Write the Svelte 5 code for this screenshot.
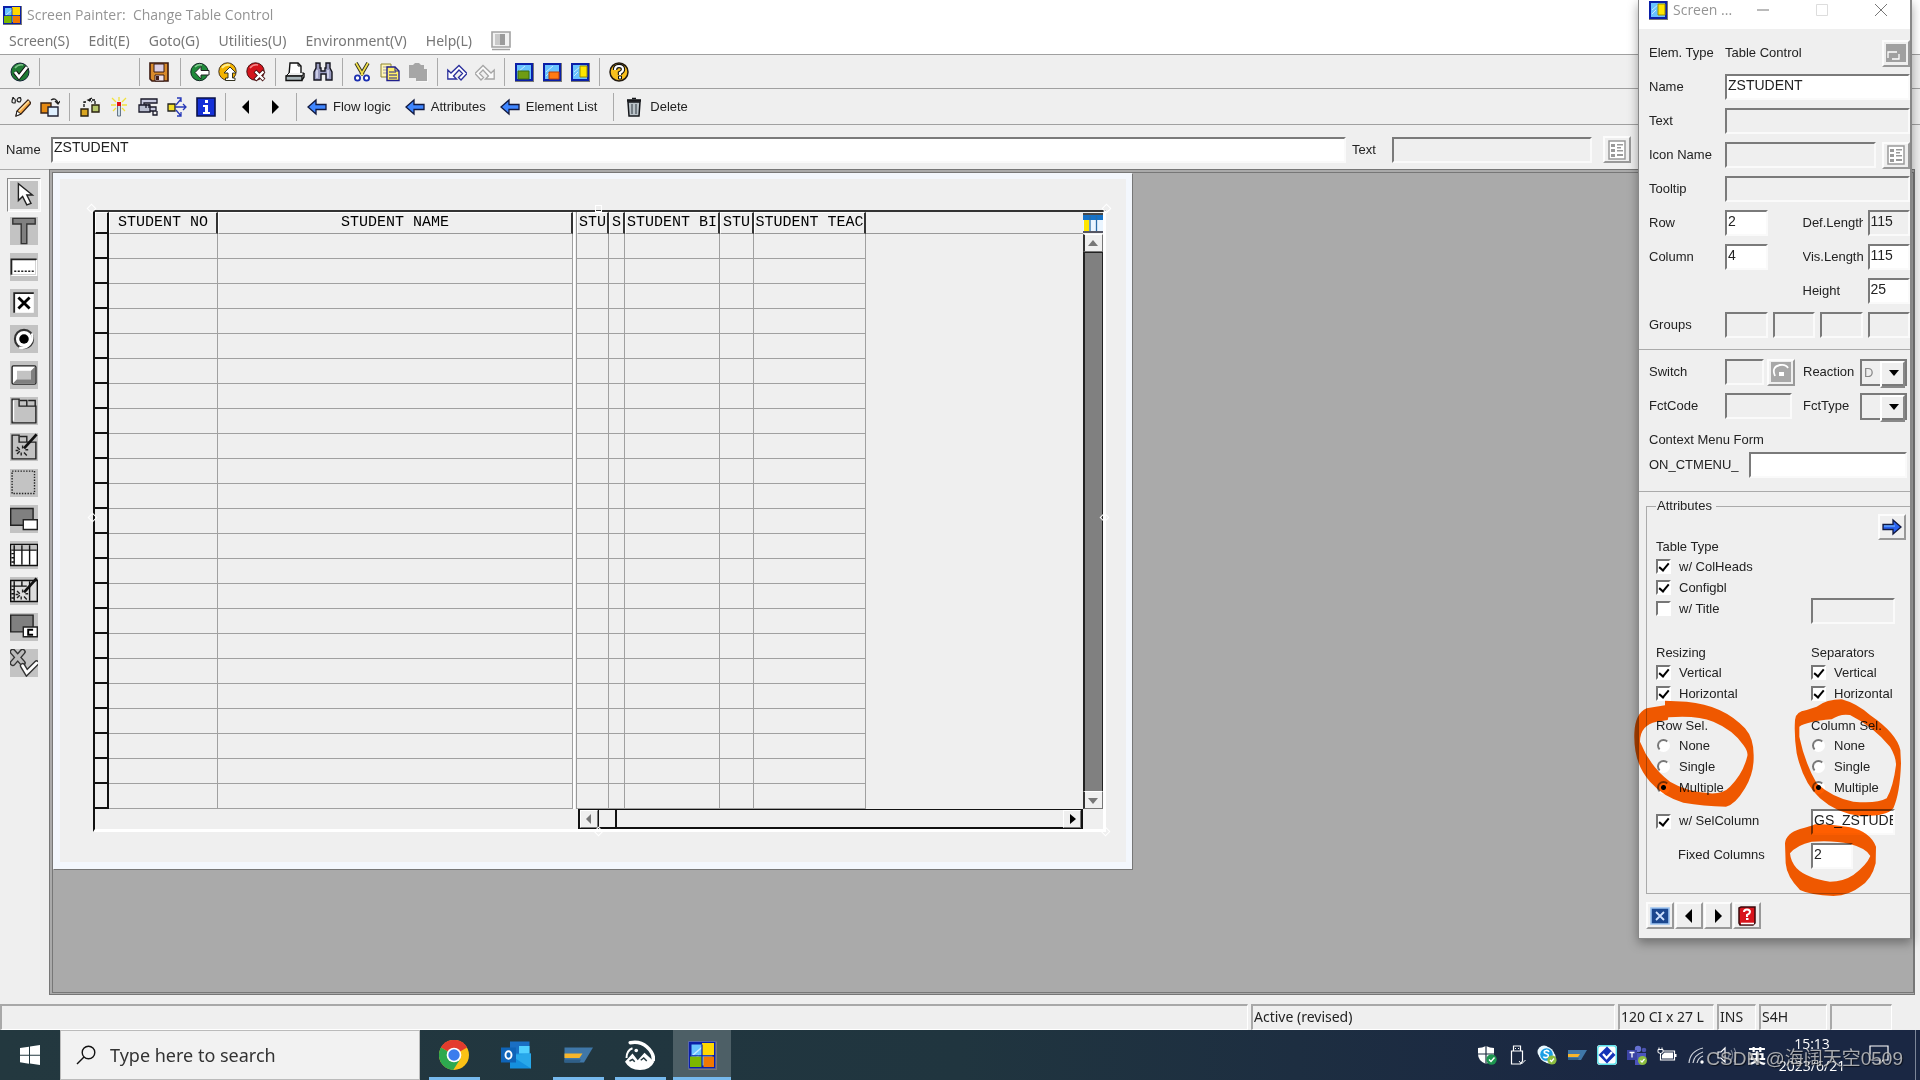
<script>
  const screenFrame = (inner) =>
    `<path d="M1 1h18v18H1z" fill="#fff"/><path d="M20 1v19H1" fill="none" stroke="#777" stroke-width="2"/><path d="M2 2h16v16H2z" fill="#69c3ff" stroke="#0a1fa8" stroke-width="2"/><path d="M4 10l7-6M4 14l4-4" stroke="#c6ecff"/>${inner}`;
  const arrow = (fill) =>
    `<path d="M1 10l8-7v4.500h10v5H9V17z" fill="${fill}" stroke="#101840" stroke-width="1.300"/>`;
  const plate = '<path d="M0 0h20v20H0z" fill="#c3c3c3"/>';
  const wand = '<path d="M19 1l-9 10" stroke="#111" stroke-width="2"/><path d="M5 10l2 2M9 9v2M5 15l2-2M10 14l2 2M8 16v-2M4 12.500h2M11 12h2" stroke="#222" fill="none"/>';

  const art = {
    painter: screenFrame('<path d="M10 2h8v8h-8z" fill="#ffd800"/><path d="M2 11h8v7H2z" fill="#7cb800"/><path d="M11 11h7v7h-7z" fill="#f07800"/><path d="M10 3v15M3 10.500h15" stroke="#0a1fa8" stroke-width=".8"/>'),
    ok: '<circle cx="10" cy="10" r="9" fill="#1f7a34" stroke="#123"/><path d="M5 6q3-4 8-3" stroke="#7ec28a" fill="none" stroke-width="1.500"/><path d="M5 10l4 5 8-10" fill="none" stroke="#111" stroke-width="4.500"/><path d="M5 10l4 5 8-10" fill="none" stroke="#fff" stroke-width="2.800"/>',
    save: '<path d="M1 1h18v18H3l-2-2z" fill="#d98a2b" stroke="#3b1a12" stroke-width="1.600"/><path d="M5 2h10v8H5z" fill="#dccfe4" stroke="#3b1a12"/><path d="M6 13h9v6H6z" fill="#efe3ee" stroke="#3b1a12"/><path d="M7 14h3v4H7z" fill="#43201c"/>',
    back: '<circle cx="9.500" cy="10" r="8.700" fill="#1f8a3a" stroke="#122"/><path d="M5 5q3-3 7-2" stroke="#86c890" fill="none" stroke-width="1.500"/><path d="M5 10.500l6-6v4h8v4.500h-8v4z" fill="#fff" stroke="#222"/>',
    up: '<circle cx="9.500" cy="9.500" r="8.700" fill="#f3b300" stroke="#432"/><path d="M4 6q3-4 8-3" stroke="#ffee88" fill="none" stroke-width="2"/><path d="M12 5l6 6h-3.500v5H17v2.500H7.500V16H10v-5H6z" fill="#fff" stroke="#332"/>',
    cancel: '<circle cx="9.500" cy="9.500" r="8.700" fill="#d4141c" stroke="#411"/><path d="M4 6q3-4 8-3" stroke="#f58a8a" fill="none" stroke-width="1.500"/><path d="M9 9l9 9M18 9l-9 9" stroke="#411" stroke-width="4"/><path d="M9.500 9.500l8 8M17.500 9.500l-8 8" stroke="#fff" stroke-width="2.400"/>',
    print: '<path d="M5 1h8l3 3v9H4z" fill="#fff" stroke="#111" stroke-width="1.400"/><path d="M13 1v3h3" fill="none" stroke="#111"/><path d="M4 11l-3 3h16l2-3h-2" fill="#eee" stroke="#111"/><path d="M1 14h16v4.500H1z" fill="#a8b4b8" stroke="#111" stroke-width="1.400"/><path d="M17 18l2-3v-4" stroke="#111" fill="none" stroke-width="1.400"/>',
    find: '<path d="M3 1h4v5h1v3h4V6h1V1h4v5l2 4v8h-6v-6H8v6H1v-8l2-4z" fill="#9a9cc0" stroke="#14141f" stroke-width="1.400"/><path d="M4 8v8M15 8v8" stroke="#d9daf0" stroke-width="1.600"/>',
    cut: '<path d="M4 1l7 12M16 1L9 13" stroke="#332" stroke-width="3.600"/><path d="M4 1l7 12M16 1L9 13" stroke="#f2e04a" stroke-width="1.700"/><circle cx="5.500" cy="16" r="2.600" fill="#fff" stroke="#1b2fb0" stroke-width="1.800"/><circle cx="14.500" cy="16" r="2.600" fill="#fff" stroke="#1b2fb0" stroke-width="1.800"/>',
    copy: '<path d="M1 2h10v13H1z" fill="#fff6b8" stroke="#8d8530"/><path d="M3 5h6M3 8h4M3 11h4" stroke="#99a"/><path d="M7 5h8l4 4v9.500H7z" fill="#ffef6a" stroke="#20208c" stroke-width="1.400"/><path d="M15 5v4h4M9 10h7M9 13h8M9 16h8" stroke="#20208c" fill="none"/>',
    paste: '<path d="M1 3h4l2-2h4l2 2h3v4h3v12H8v-3H1z" fill="#a6a6a6"/><path d="M20 8v12H9" stroke="#fff" fill="none"/>',
    undo: '<path d="M.8 8v9h8.700l-3-3 5.500-6 3.500 3.500-4 4 2.500 2.500 6-6.500L12 3.500 4 11z" fill="#fff" stroke="#2a2f9c" stroke-width="1.300"/>',
    redo: '<path d="M19.200 8v9h-8.700l3-3L8 8l-3.500 3.500 4 4L6 18 0 11.500 8 3.500l8 7.500z" fill="#fafafa" stroke="#a6a6a6" stroke-width="1.300"/>',
    s1: screenFrame('<path d="M4 9h11v8H4z" fill="#6f9c14" stroke="#3d6a12"/>'),
    s2: screenFrame('<path d="M7 10h10v7H7z" fill="#ff7a14" stroke="#b8400c"/>'),
    s3: screenFrame('<path d="M10 4h7v11h-7z" fill="#ffe600" stroke="#9a8d00"/>'),
    help: '<circle cx="10" cy="10" r="9" fill="#f8c01c" stroke="#221a10" stroke-width="1.500"/><path d="M6 8q0-4 4-4t4 3.500q0 2-3 3.500v2" fill="none" stroke="#111" stroke-width="4.400"/><path d="M6 8q0-4 4-4t4 3.500q0 2-3 3.500v2" fill="none" stroke="#fff" stroke-width="2.200"/><path d="M9.500 14h3v3h-3z" fill="#fff" stroke="#111"/>',
    layout: '<path d="M1 1h18v15H1z" fill="#f2f2f2" stroke="#a2a2a2" stroke-width="1.600"/><path d="M4 3h8v11H4z" fill="#c9c9c9"/><path d="M9 3h5v11H9z" fill="#9b9b9b"/><path d="M1 18.500h18" stroke="#a2a2a2" stroke-width="1.500"/>',
    pencil: '<path d="M1 5q0-4 2-3.500T4 6Q1 6 1 5M6 3q1-3 3-2t0 4q-3 0-3-2M1 1l2-.5M7 1l3-1" fill="none" stroke="#222" stroke-width="1.200"/><path d="M17 3l3 3-10 11-5 2 1-5z" fill="#f5a742" stroke="#3a2418" stroke-width="1.300"/><path d="M8 14L18 4" stroke="#ffe0a0" stroke-width="1.500"/><path d="M5 19l1-5 4 3z" fill="#fff" stroke="#222"/>',
    swap: '<path d="M1 6h10v10H1z" fill="#e58a14" stroke="#3a2418" stroke-width="1.400"/><path d="M8 10h10v9H8z" fill="#dff0ff" stroke="#223" stroke-width="1.400"/><path d="M11 3q5-3 7 3m-3-2l3 3 2-3" fill="none" stroke="#222" stroke-width="1.300"/>',
    link: '<path d="M1 12h7v7H1z" fill="#d9a520" stroke="#2a2210" stroke-width="1.400"/><path d="M12 8h7v7h-7z" fill="#b6c66a" stroke="#2a2210" stroke-width="1.400"/><path d="M4 10V5h3M8 3h7v4M12 1l-4 2 4 2" fill="none" stroke="#111" stroke-width="1.300" stroke-dasharray="3 1"/>',
    flare: '<path d="M10 0v4M3 1l4 4M17 1l-4 4M2 8h5M13 8h5M4 14l3-3M16 14l-3-3" stroke="#f1e23c" stroke-width="1.300"/><path d="M8.500 8h3v11h-3z" fill="#cfe0ea" stroke="#678"/><path d="M8 5h4v4H8z" fill="#e01010"/>',
    caliper: '<path d="M3 2h16v4H6v4h12v4H3z" fill="#c9cbe0" stroke="#181828" stroke-width="1.300"/><path d="M1 8h11v7H1z" fill="#b9bed0" stroke="#181828" stroke-width="1.300"/><path d="M8 7v4M11 7v4M15 14v4h4v-4" stroke="#181828" fill="none" stroke-width="1.300"/>',
    expand: '<path d="M1 7h7v7H1z" fill="#f3e02a" stroke="#222" stroke-width="1.300"/><path d="M8 10h11M16 7l3 3-3 3M9 8l5-6M10 1h4v4M9 13l5 6M10 19h4v-4" fill="none" stroke="#2638b8" stroke-width="1.300"/>',
    info: '<path d="M1 1h18v18H1z" fill="#1430d8" stroke="#0a124a" stroke-width="1.600"/><path d="M9 3h3v3H9zM7 8h5v7h2v2H7v-2h2v-5H7z" fill="#fff"/>',
    prev: '<path d="M13 3v14l-7-7z" fill="#000"/>',
    next: '<path d="M7 3v14l7-7z" fill="#000"/>',
    left: arrow('#3f86ff'),
    right: '<path d="M19 10l-8-7v4.500H1v5h10V17z" fill="#2a62f0" stroke="#101840" stroke-width="1.300"/><path d="M2 9h11" stroke="#7ec4ff"/>',
    trash: '<path d="M4 5h12l-1 14H5z" fill="#b9c2c8" stroke="#16181c" stroke-width="1.500"/><path d="M8 7v10M12 7v10" stroke="#5c666c" stroke-width="1.500"/><path d="M3 3.500h14" stroke="#16181c" stroke-width="2.600"/><path d="M8 1.500h4" stroke="#16181c" stroke-width="1.500"/>',
    list: '<path d="M2 1h16v18H2z" fill="#fff" stroke="#9a9a9a" stroke-width="1.500"/><path d="M4 4h4v3H4zM4 9h4v3H4zM4 14h4v3H4zM10 4h6v1.500h-6zM10 7h4v1.500h-4zM10 10h6v1.500h-6zM10 14h6v2h-6z" fill="#999"/>',
    elem: '<path d="M0 1h20v18H0z" fill="#a0a0a0"/><path d="M2 15V9h9M6 16h7v-5" fill="none" stroke="#fff" stroke-width="1.300"/>',
    swi: '<path d="M0 0h20v20H0z" fill="#a8a8a8"/><path d="M4 14q-4-9 5-11 6-1 8 3" fill="none" stroke="#fff" stroke-width="1.800"/><path d="M8 10h5v4H8z" fill="#fff"/>',
    close: '<path d="M1 2h18v16H1z" fill="#1b478f" stroke="#9cc4f2" stroke-width="1.600"/><path d="M6 6l8 8M14 6l-8 8" stroke="#cfe2ff" stroke-width="1.800"/>',
    manual: '<path d="M2 2l2-1h14v16l-2 2H3l-1-2z" fill="#d8141c" stroke="#3a0a0c" stroke-width="1.500"/><path d="M4 17.500h13" stroke="#fff" stroke-width="1.600"/><path d="M7 6q0-2.500 3-2.500T13 6q0 1.500-3 3v2M9 13h2.500" fill="none" stroke="#fff" stroke-width="2"/>',
    tArrow: plate + '<path d="M6 2v12l3-3 3 6 3-1-3-6h4z" fill="#fff" stroke="#222"/>',
    tText: plate + '<path d="M2 1h16v4h-6v14H8V5H2z" fill="#808080" stroke="#333"/>',
    tField: plate + '<path d="M1 5h17v10H1z" fill="#fff"/><path d="M1 15.500V4.500h18" fill="none" stroke="#222" stroke-width="1.300"/><path d="M3 13h15" stroke="#222" stroke-dasharray="1.500 1"/><path d="M19 5v11H1" stroke="#fff" fill="none"/>',
    tCheck: plate + '<path d="M3 3h14v14H3z" fill="#fff"/><path d="M3 17V3h14" fill="none" stroke="#222" stroke-width="1.300"/><path d="M6 6l8 8M14 6l-8 8" stroke="#000" stroke-width="2"/>',
    tRadio: plate + '<circle cx="10" cy="10" r="6.500" fill="#fff" stroke="#333" stroke-width="1.500"/><path d="M15.500 6a7.500 7.500 0 0 1-9 10" stroke="#fff" fill="none" stroke-width="1.500"/><circle cx="10" cy="10" r="3.400" fill="#000"/>',
    tButton: plate + '<rect x="1.500" y="3.500" width="17" height="13" rx="1" fill="#fff" stroke="#222"/><path d="M18 4v12H2l3-3h10V7z" fill="#808080"/><path d="M5 7h10v6H5z" fill="#c3c3c3"/>',
    tTabs: plate + '<path d="M1.500 18.500v-17h5v5h12v12z" fill="#c3c3c3" stroke="#222"/><path d="M7 2.500h5v4M13 2.500h5v4" fill="none" stroke="#222"/><path d="M2.500 17V2.500" stroke="#fff"/>',
    tTabWand: plate + '<path d="M1.500 18.500v-17h5v5h12v12z" fill="#c3c3c3" stroke="#222"/><path d="M7 2.500h5v4" fill="none" stroke="#222"/>' + wand,
    tBox: plate + '<path d="M1.500 1.500h16v16h-16z" fill="none" stroke="#222" stroke-dasharray="1 1"/>',
    tSub: plate + '<path d="M.5 2.500h16v12H.5z" fill="#808080" stroke="#222"/><path d="M9.500 10.500h10v7h-10z" fill="#fff" stroke="#222"/>',
    tTable: plate + '<path d="M.5 2.500h19v15H.5z" fill="#fff" stroke="#111"/><path d="M1 3h18v3H1z" fill="#c3c3c3"/><path d="M3 3v14M8.500 3v14M14 3v14M1 6.500h18M1 9h2M1 12h2M1 15h2" stroke="#111"/>',
    tTableWand: plate + '<path d="M.5 2.500h19v15H.5z" fill="#ddd" stroke="#111"/><path d="M3 3v14M8.500 3v3M14 3v14M1 6.500h11M1 9h2M1 12h2M1 15h2" stroke="#111"/>' + wand,
    tCustom: plate + '<path d="M.5 1.500h16v12H.5z" fill="#808080" stroke="#222"/><path d="M9.500 10h10v7h-10z" fill="#fff" stroke="#222"/><path d="M16.500 12h-3.500v3.500h3.500" fill="none" stroke="#000" stroke-width="1.400"/>',
    tStatus: plate + '<path d="M2 2l7 8M9 2l-7 8" stroke="#333" stroke-width="4.500" stroke-linecap="round"/><path d="M2 2l7 8M9 2l-7 8" stroke="#bbb" stroke-width="2.500" stroke-linecap="round"/><path d="M9 12l3 5 7-7" fill="none" stroke="#333" stroke-width="4" stroke-linecap="round"/><path d="M9 12l3 5 7-7" fill="none" stroke="#fff" stroke-width="2" stroke-linecap="round"/>',
    config: '<path d="M0 2h20v17H0z" fill="#eaf5ff"/><path d="M0 1h20" stroke="#111" stroke-width="1.500"/><path d="M0 2h20v5H0z" fill="#1673c8"/><path d="M1 7h5v11H1z" fill="#ffe600"/><path d="M7 3v15M13.500 3v15" stroke="#2a6ca8" stroke-width="1.300"/><path d="M0 19h20" stroke="#223" stroke-width="1.500"/>',
    win: '<path d="M0 3l9-1.300v8H0zM10 1.500L20 0v9.700H10zM0 10.700h9v8L0 17.300zM10 10.700h10V20l-10-1.400z" fill="#fff"/>',
    search: '<circle cx="12.500" cy="7.500" r="6.300" fill="none" stroke="#111" stroke-width="1.400"/><path d="M8 12l-7 7" stroke="#111" stroke-width="1.500"/>',
    chrome: '<circle cx="10" cy="10" r="10" fill="#fbc116"/><path d="M10 10L1.300 5A10 10 0 0 1 18.700 5z" fill="#e33b2e"/><path d="M10 10L1.300 5A10 10 0 0 0 9.500 20L14.300 12.500z" fill="#2da94f"/><circle cx="10" cy="10" r="4.900" fill="#fff"/><circle cx="10" cy="10" r="3.800" fill="#3b7ded"/>',
    outlook: '<path d="M6 1h13v9H6z" fill="#1a6fc4"/><path d="M12 4h7v6h-7z" fill="#50d0ff"/><path d="M6 9h14v10H6z" fill="#1490df"/><path d="M6 10l14 9V9z" fill="#28a8ea"/><path d="M0 5h10v10H0z" fill="#0f64b8"/><ellipse cx="5" cy="10" rx="2" ry="2.500" fill="none" stroke="#fff" stroke-width="1.300"/>',
    sap: '<path d="M1 5h19l-6 10H1z" fill="#3f77a8"/><path d="M1 9h12l-2 3H1z" fill="#f6b62c"/><path d="M1 13h11l-1 2H1z" fill="#2f5f88"/>',
    peak: '<path d="M3.500 1.800Q10 .5 14.500 4.500T19 13" fill="none" stroke="#fff" stroke-width="2.400" stroke-linecap="round"/><path d="M1 12Q1 7 5 5.500" fill="none" stroke="#fff" stroke-width="1.300"/><circle cx="7.500" cy="7" r="1.200" fill="#fff"/><path d="M0 14.500l5-5.500 3.500 4.500L13 8.500l6.500 6Q17 20 10 20T0 14.500z" fill="#fff"/><path d="M3 14l2-1 1.500 1.500M10.500 13.500l2-1.500 2 2" fill="none" stroke="#24383f"/>',
    shield: '<path d="M9 1q4 2 8 2v6q0 7-8 10Q1 16 1 9V3q4 0 8-2z" fill="#fff"/><path d="M9 1v18M1 9h16" stroke="#1d2c40" stroke-width="1.200"/><circle cx="14.500" cy="14.500" r="5.200" fill="#1d9650"/><path d="M12 14.500l2 2 3.500-4" fill="none" stroke="#fff" stroke-width="1.400"/>',
    usb: '<path d="M6.500 1h7v5h-7zM4.500 6h11v10l-2 3h-9z" fill="none" stroke="#fff" stroke-width="1.200"/><path d="M8.500 3v1M11.500 3v1" stroke="#fff"/><path d="M12 16l2.500 3 4-4" fill="none" stroke="#fff"/>',
    skype: '<circle cx="7" cy="7" r="6.500" fill="#eaf8ff"/><circle cx="12" cy="12" r="6.500" fill="#eaf8ff"/><circle cx="9.500" cy="9.500" r="7.500" fill="#eaf8ff"/><circle cx="9.500" cy="9.500" r="6.300" fill="#1c9fe4"/><path d="M12 7q-1-2-3-1.500-2.500.5-1.500 2.500l3.500 1.500q1 2.500-1.500 3T6.500 11.500" fill="none" stroke="#fff" stroke-width="1.600"/><circle cx="15" cy="15" r="4.600" fill="#8cbd3f"/><path d="M13 15l1.500 1.500 2.500-3" fill="none" stroke="#fff" stroke-width="1.300"/>',
    gem: '<rect width="20" height="20" rx="3" fill="#fff"/><rect x=".7" y=".7" width="18.600" height="18.600" rx="3" fill="none" stroke="#5be0ea" stroke-width="1.400"/><path d="M10 1.500l8.500 8.500-8.500 8.500L1.500 10z" fill="#1433b8"/><path d="M6 9l3.500 4L15 7" fill="none" stroke="#fff" stroke-width="2.200"/>',
    teams: '<circle cx="11" cy="4" r="3.200" fill="#6570d0"/><circle cx="17" cy="5" r="2.300" fill="#4b53b0"/><path d="M8 8h11v8l-4 4H8z" fill="#4b53bc"/><path d="M0 5h10v10H0z" fill="#3b43a4"/><path d="M2.500 7.500h5M5 7.500v5" stroke="#fff" stroke-width="1.300"/><circle cx="15.500" cy="15.500" r="4.500" fill="#8cbd3f"/><path d="M13.500 15.500l1.500 1.500 2.500-3" fill="none" stroke="#fff" stroke-width="1.200"/>',
    battery: '<path d="M6 6h11.500v9h-14v-4" fill="none" stroke="#fff" stroke-width="1.200"/><path d="M7.500 7.500h8.500v6H5V10z" fill="#fff"/><path d="M17.500 9h2v3h-2" fill="#fff"/><path d="M1 4.500h5v3q-2.500 2-5 0zM2 2.500v2M5 2.500v2M3.500 8v3" stroke="#fff" fill="none"/>',
    wifi: '<path d="M2 18Q3 6 16 3M6 18q1-8 10-11M10 18q1-5 6-7" fill="none" stroke="#d0d4dc" stroke-width="1.200"/><circle cx="15" cy="17" r="1.700" fill="#fff"/>',
    sound: '<path d="M1 7h3l4-4v14l-4-4H1z" fill="none" stroke="#fff" stroke-width="1.200"/><path d="M11 7q2 3 0 6M14 5q3 5 0 10M17 3q4 7 0 14" fill="none" stroke="#7d8696" stroke-width="1.200"/>',
    note: '<path d="M1 1h18v14h-5l-3 4v-4H1z" fill="none" stroke="#fff" stroke-width="1.200"/>'
  };

  const mainTools = [
    [['save', 'Save']],
    [['back', 'Back'], ['up', 'Exit'], ['cancel', 'Cancel']],
    [['print', 'Print'], ['find', 'Find']],
    [['cut', 'Cut'], ['copy', 'Copy'], ['paste', 'Paste']],
    [['undo', 'Undo'], ['redo', 'Redo']],
    [['s1', 'Layout 1'], ['s2', 'Layout 2'], ['s3', 'Layout 3']],
    [['help', 'Help']]
  ];
  const appTools = [
    [['pencil', 'Display or change'], ['swap', 'Other object']],
    [['link', 'Group'], ['flare', 'Activate'], ['caliper', 'Check'], ['expand', 'Where used'], ['info', 'Information']],
    [['prev', 'Previous'], ['next', 'Next']]
  ];
  const menus = ['Screen(S)', 'Edit(E)', 'Goto(G)', 'Utilities(U)', 'Environment(V)', 'Help(L)'];
  const palette = [
    ['tArrow', 'Select'], ['tText', 'Text field'], ['tField', 'Input field'], ['tCheck', 'Checkbox'],
    ['tRadio', 'Radio button'], ['tButton', 'Pushbutton'], ['tTabs', 'Tabstrip'], ['tTabWand', 'Tabstrip wizard'],
    ['tBox', 'Box'], ['tSub', 'Subscreen'], ['tTable', 'Table control'], ['tTableWand', 'Table wizard'],
    ['tCustom', 'Custom control'], ['tStatus', 'Status icon']
  ];
  const heads = ['', 'STUDENT NO', 'STUDENT NAME', '', 'STU', 'S', 'STUDENT BI', 'STU', 'STUDENT TEAC', ''];
  const kinds = ['sel', 'c1', 'c2', 'split', 'c3', 'c4', 'c5', 'c6', 'c7', 'rest'];
  const rows = Array.from({ length: 23 }, (_, i) => i);
  const tray = [
    ['shield', 'Security'], ['usb', 'Safely remove hardware'], ['skype', 'Skype'], ['sap', 'SAP Logon'], ['gem', 'Agent'],
    ['teams', 'Teams'], ['battery', 'Battery'], ['wifi', 'Network'], ['sound', 'Volume']
  ];
</script>

{#snippet icon(name)}
  <svg class="ico" viewBox="0 0 20 20" aria-hidden="true">{@html art[name]}</svg>
{/snippet}

{#snippet tools(groups)}
  {#each groups as group}
    <div class="group">
      {#each group as [name, label]}
        <button class="tool" aria-label={label}>{@render icon(name)}</button>
      {/each}
    </div>
  {/each}
{/snippet}

{#snippet check(label, on)}
  <label class="opt"><input type="checkbox" checked={on} />{label}</label>
{/snippet}

{#snippet radios(name)}
  <label class="opt"><input type="radio" {name} value="none" />None</label>
  <label class="opt"><input type="radio" {name} value="single" />Single</label>
  <label class="opt"><input type="radio" {name} value="multiple" checked />Multiple</label>
{/snippet}

<div class="desktop">
  <header class="titlebar">{@render icon('painter')}<h1>Screen Painter:&nbsp; Change Table Control</h1></header>
  <nav class="menubar">
    {#each menus as m}<button>{m}</button>{/each}
    <button class="layout" aria-label="Local layout">{@render icon('layout')}</button>
  </nav>

  <div class="toolbar">
    <div class="group"><button class="tool" aria-label="Enter">{@render icon('ok')}</button></div>
    <div class="group"><input class="command" aria-label="Command" /></div>
    {@render tools(mainTools)}
  </div>
  <div class="toolbar app">
    {@render tools(appTools)}
    <div class="group wide">
      {#each ['Flow logic', 'Attributes', 'Element List'] as t}
        <button class="texted">{@render icon('left')}{t}</button>
      {/each}
    </div>
    <div class="group wide"><button class="texted">{@render icon('trash')}Delete</button></div>
  </div>

  <div class="namebar">
    <label for="nm">Name</label><input id="nm" class="field grow" value="ZSTUDENT" />
    <label for="tx">Text</label><input id="tx" class="field textfield" disabled />
    <button class="raised" aria-label="Choose icon">{@render icon('list')}</button>
  </div>

  <main class="work">
    <aside class="palette">
      {#each palette as [name, label], i}
        <button class:active={i === 0} aria-label={label}>{@render icon(name)}</button>
      {/each}
    </aside>
    <div class="canvas">
      <div class="paper">
        <div class="control">
          <i class="grip tl"></i><i class="grip tm"></i><i class="grip tr"></i><i class="grip ml"></i><i class="grip mr"></i><i class="grip bm"></i><i class="grip br"></i>
          <div class="upper">
            <table>
              <colgroup>{#each kinds as k}<col class={k} />{/each}</colgroup>
              <thead>
                <tr>{#each heads as h, i}<th class={kinds[i]}>{h}</th>{/each}</tr>
              </thead>
              <tbody>
                {#each rows as r}
                  <tr>{#each kinds as k}<td class={k}></td>{/each}</tr>
                {/each}
              </tbody>
            </table>
            <div class="vscroll">
              <button class="cfg" aria-label="Configuration">{@render icon('config')}</button>
              <button class="sb" aria-label="Scroll up"><svg viewBox="0 0 16 16"><path d="M3 11l5-6 5 6z" fill="#777" /></svg></button>
              <div class="track"></div>
              <button class="sb" aria-label="Scroll down"><svg viewBox="0 0 16 16"><path d="M3 6l5 6 5-6z" fill="#777" /></svg></button>
            </div>
          </div>
          <div class="hscroll">
            <button class="sb" aria-label="Scroll left"><svg viewBox="0 0 16 16"><path d="M10 3v10L5 8z" fill="#777" /></svg></button>
            <div class="thumb"></div>
            <div class="hrest"></div>
            <button class="sb" aria-label="Scroll right"><svg viewBox="0 0 16 16"><path d="M6 3v10l6-5z" fill="#000" /></svg></button>
          </div>
        </div>
      </div>
    </div>
  </main>

  <footer class="status">
    <span class="msg"></span><span class="state">Active (revised)</span><span class="size">120 CI x 27 L</span><span class="ins">INS</span><span class="sys">S4H</span><span class="end"></span>
  </footer>

  <section class="dialog" aria-label="Element attributes">
    <header>
      {@render icon('s3')}<h2>Screen ...</h2>
      <button aria-label="Minimize"><svg viewBox="0 0 12 12"><path d="M0 6h12" stroke="#777" /></svg></button>
      <button aria-label="Maximize"><svg viewBox="0 0 12 12"><path d="M.5.5h11v11H.5z" stroke="#ddd" fill="none" /></svg></button>
      <button aria-label="Close"><svg viewBox="0 0 12 12"><path d="M0 0l12 12M12 0L0 12" stroke="#777" /></svg></button>
    </header>

    <div class="form">
      <span>Elem. Type</span><span class="three">Table Control</span><button class="raised last" aria-label="Convert">{@render icon('elem')}</button>
      <label for="dn">Name</label><input id="dn" class="field four" value="ZSTUDENT" />
      <label for="dt">Text</label><input id="dt" class="field four" disabled />
      <label for="di">Icon Name</label>
      <div class="four pair"><input id="di" class="field grow" disabled /><button class="raised" aria-label="Choose icon">{@render icon('list')}</button></div>
      <label for="dp">Tooltip</label><input id="dp" class="field four" disabled />
      <label for="dr">Row</label><input id="dr" class="field" value="2" /><label class="clip" for="dl">Def.Length</label><input id="dl" class="field" value="115" disabled />
      <label for="dc">Column</label><input id="dc" class="field" value="4" /><label class="clip" for="vl">Vis.Length</label><input id="vl" class="field" value="115" />
      <label class="clip" for="dh">Height</label><input id="dh" class="field" value="25" />
      <span class="first">Groups</span>
      {#each [1, 2, 3, 4] as g}<input class="field" aria-label={'Group ' + g} disabled />{/each}
    </div>

    <div class="codes">
      <label for="sw">Switch</label>
      <div class="pair"><input id="sw" class="field switch" disabled /><button class="raised" aria-label="Switch details">{@render icon('swi')}</button></div>
      <label for="re">Reaction</label>
      <div class="drop"><select id="re" disabled><option>D</option></select></div>
      <label for="fc">FctCode</label><div class="pair"><input id="fc" class="field code" disabled /></div>
      <label for="ft">FctType</label>
      <div class="drop"><select id="ft"><option></option></select></div>
    </div>
    <div class="context">
      <span>Context Menu Form</span>
      <div class="ctrow"><label for="cm">ON_CTMENU_</label><input id="cm" class="field grow" /></div>
    </div>

    <fieldset>
      <legend>Attributes</legend>
      <button class="raised go" aria-label="Further attributes">{@render icon('right')}</button>
      <div class="cap">Table Type</div>
      <div class="stack">{@render check('w/ ColHeads', true)}{@render check('Configbl', true)}</div>
      <div class="two">{@render check('w/ Title', false)}<input class="field title" aria-label="Title element" disabled /></div>
      <div class="two resize">
        <div><div class="cap">Resizing</div>{@render check('Vertical', true)}{@render check('Horizontal', true)}</div>
        <div><div class="cap">Separators</div>{@render check('Vertical', true)}{@render check('Horizontal', true)}</div>
      </div>
      <div class="two picks">
        <div><div class="cap">Row Sel.</div>{@render radios('rowsel')}</div>
        <div><div class="cap">Column Sel.</div>{@render radios('colsel')}</div>
      </div>
      <div class="two selcol">{@render check('w/ SelColumn', true)}<input class="field title" aria-label="Selection column field" value="GS_ZSTUDE" /></div>
      <div class="two"><label class="fixed" for="fx">Fixed Columns</label><input id="fx" class="field short" value="2" /></div>
    </fieldset>

    <div class="buttons">
      <button class="raised" aria-label="Close">{@render icon('close')}</button>
      <button class="raised" aria-label="Previous element">{@render icon('prev')}</button>
      <button class="raised" aria-label="Next element">{@render icon('next')}</button>
      <button class="raised" aria-label="Help">{@render icon('manual')}</button>
    </div>

    <svg class="marks" viewBox="0 0 900 960" aria-hidden="true">
      <g fill="#ff5e00" fill-rule="evenodd">
        <path d="M135 212L200 215Q310 225 375 295 402 325 401 380 402 430 375 475 345 525 318 530 250 528 190 518 130 500 90 455 40 400 43 310 45 250 80 235L135 226ZM145 262Q230 255 280 275 340 300 370 345 385 365 382 378 370 430 330 470 310 492 270 490 200 485 150 455 90 410 60 335 60 285 110 275L143 270Z" />
        <path d="M525 270Q525 245 560 240L590 230Q620 208 665 208 710 220 750 255 830 310 841 360L843 400Q840 490 820 535 800 560 720 558 650 550 600 505 550 460 530 370 522 320 525 270ZM538 290Q560 275 635 268 660 250 690 255 760 290 810 350 828 380 828 405 820 470 800 505 770 522 700 515 640 505 590 460 555 400 538 320Z" />
        <path d="M495 640Q498 610 540 597 570 590 585 583 620 580 690 592 750 605 768 650L767 700Q755 750 720 770 690 795 640 798 570 795 540 780 500 740 497 700ZM510 670Q530 645 575 635 640 630 690 642 740 655 751 678 740 705 700 735 670 755 630 755 560 745 530 715 512 695 510 670Z" />
      </g>
    </svg>
  </section>

  <div class="taskbar">
    <button class="start" aria-label="Start">{@render icon('win')}</button>
    <label class="find">{@render icon('search')}<input type="text" placeholder="Type here to search" aria-label="Search" /></label>
    <div class="apps">
      <button class="run" aria-label="Chrome">{@render icon('chrome')}</button>
      <button aria-label="Outlook">{@render icon('outlook')}</button>
      <button class="run" aria-label="SAP Logon">{@render icon('sap')}</button>
      <button class="run" aria-label="Snipping tool">{@render icon('peak')}</button>
      <button class="run on" aria-label="Screen Painter">{@render icon('painter')}</button>
    </div>
    <div class="tray">
      {#each tray as [name, label]}<button aria-label={label}>{@render icon(name)}</button>{/each}
      <button class="ime">英</button>
      <div class="clock"><span>15:13</span><span>2023/6/21</span></div>
      <button class="note" aria-label="Notifications">{@render icon('note')}</button>
      <div class="peek"></div>
    </div>
    <div class="credit">CSDN @海阔天空0509</div>
  </div>
</div>

<style>
  :global(body) { background: #efefef; }
  :global(*) { box-sizing: border-box; }
  .desktop { position: relative; display: flex; flex-direction: column; min-height: 100vh; overflow: hidden; background: #efefef; color: #222; font: 13px/16px "Liberation Sans", Arial, sans-serif; }
  button { border: 0; padding: 0; background: none; font: inherit; color: inherit; display: flex; align-items: center; justify-content: center; }
  input, select { font: inherit; color: inherit; min-width: 0; }
  h1, h2 { margin: 0; font-weight: 400; color: #949494; }
  .ico { width: 20px; height: 20px; flex: none; display: block; }

  .titlebar { display: flex; align-items: center; gap: 5px; height: 30px; padding-left: 2px; background: #fff; }
  h1 { font: 14px/20px "Open Sans", sans-serif; }
  h2 { font: 14px/20px "Open Sans", sans-serif; }
  .menubar { display: flex; align-items: center; gap: 19px; height: 25px; padding: 0 9px 2px; background: #fff; border-bottom: 1px solid #a0a0a0; color: #777; font: 14px/20px "Noto Sans", sans-serif; }
  .toolbar { display: flex; align-items: center; height: 34px; border-bottom: 1px solid #a0a0a0; padding-left: 1px; }
  .app { height: 36px; }
  .group { display: flex; align-items: center; height: 28px; padding: 0 5px; border-right: 1px solid #aaa; }
  .group:last-child { border-right: 0; }
  .group:nth-child(3) { padding-right: 7px; }
  .tool { width: 28px; height: 26px; }
  .app .tool { width: 29px; }
  .command { width: 89px; border: 0; background: none; }
  .wide { padding: 0 16px 0 10px; gap: 14px; }
  .texted { gap: 6px; }

  .field { height: 26px; width: 100%; border: 2px solid; border-color: #7a7a7a #fafafa #fafafa #7a7a7a; background: #fff; border-radius: 0; padding: 0 0 5px 1px; font-size: 14px; outline: 0; }
  .field:disabled { background: #efefef; color: #222; }
  .grow { flex: 1; }
  .raised { width: 28px; height: 27px; flex: none; border: 2px solid; border-color: #fcfcfc #999 #999 #fcfcfc; background: #efefef; }

  .namebar { display: flex; align-items: center; height: 44px; padding: 5px 289px 0 6px; }
  .namebar label:first-child { width: 45px; }
  .namebar label:nth-of-type(2) { width: 40px; margin-left: 6px; }
  .textfield { width: 200px; margin-right: 11px; }

  .work { display: flex; flex: 1; margin-right: 5px; }
  .palette { width: 49px; padding: 8px 0 0 7px; border-top: 1px solid #aaa; display: flex; flex-direction: column; gap: 2px; flex: none; }
  .palette button { width: 34px; height: 34px; }
  .palette .ico { width: 28px; height: 28px; }
  .palette .active { border: 1px solid; border-color: #888 #fff #fff #888; background: #f6f6f6; }
  .canvas { flex: 1; min-width: 0; background: #aaa; border: 4px double #777; border-right: 2px solid #777; border-bottom: 3px double #777; }
  .paper { width: 58%; min-width: 900px; padding: 31px 20px 30px 33px; border: 7px solid #f3f7fd; border-width: 6px 6px 7px 7px; background: #efefef; box-shadow: 1px 1px 0 #777; }

  .control { position: relative; border-left: 2px solid #111; border-top: 2px solid #333; border-right: 3px solid #fff; border-bottom: 3px solid #fff; }
  .upper { display: flex; }
  table { flex: 1; min-width: 0; table-layout: fixed; border-collapse: separate; border-spacing: 0; }
  col.sel { width: 14px; } col.c1 { width: 109px; } col.c2 { width: 355px; } col.split { width: 4px; }
  col.c3 { width: 32px; } col.c4 { width: 16px; } col.c5 { width: 95px; } col.c6 { width: 34px; } col.c7 { width: 112px; }
  th { height: 22px; padding: 0; font: 15px/20px "Liberation Mono", monospace; color: #000; text-align: center; white-space: nowrap; overflow: hidden; border-right: 2px solid #333; border-bottom: 1px solid #999; border-top: 1px solid #fff; border-left: 1px solid #fff; }
  td { height: 25px; padding: 0; border-right: 1px solid #a0a0a0; border-bottom: 1px solid #a0a0a0; }
  td.sel, th.sel { border-right: 2px solid #111; border-bottom: 2px solid #111; }
  td.split, th.split { border-bottom: 0; border-top: 0; border-left: 2px solid #fff; border-right: 1px solid #999; }
  td.rest { border: 0; } th.rest { border-right: 0; border-left: 0; border-top: 0; }
  .vscroll { width: 20px; flex: none; display: flex; flex-direction: column; }
  .cfg { height: 22px; }
  .track { flex: 1; background: #808080; border: solid #222; border-width: 1px 1px 0 2px; }
  .sb { width: 18px; height: 18px; flex: none; border: 1px solid; border-color: #fff #777 #777 #fff; background: #efefef; }
  .vscroll .sb { width: 20px; border-left: 2px solid #333; }
  .sb svg { width: 16px; height: 16px; }
  .hscroll { display: flex; align-items: center; height: 20px; margin: 0 20px 0 483px; border: 1px solid #111; border-width: 1px 2px 2px; }
  .thumb { width: 19px; height: 17px; border-left: 1px solid #111; border-right: 2px solid #111; }
  .hrest { flex: 1; }
  .grip { position: absolute; width: 7px; height: 7px; border: 1px solid #fff; transform: rotate(45deg); }
  .tl { left: -7px; top: -7px; } .tm { left: 500px; top: -7px; transform: none; } .tr { right: -7px; top: -7px; }
  .ml { left: -6px; top: 49%; } .mr { right: -5px; top: 49%; } .bm { left: 500px; bottom: -6px; } .br { right: -6px; bottom: -6px; }

  .status { display: flex; gap: 3px; height: 35px; padding: 9px 28px 0 0; margin-bottom: 50px; font: 14px/22px "Noto Sans", sans-serif; }
  .status span { border: solid; border-width: 2px 1px 1px 2px; border-color: #a8a8a8 #fff #fff #a8a8a8; padding-left: 1px; white-space: nowrap; overflow: hidden; }
  .msg { flex: 1; } .state { width: 364px; } .size { width: 96px; } .ins { width: 39px; } .sys { width: 68px; } .end { width: 62px; }

  .dialog { position: absolute; top: 0; right: 8px; width: 274px; background: #efefef; border: 1px solid #888; border-top: 0; border-right-width: 2px; box-shadow: 0 4px 10px rgba(0,0,0,.35); padding-bottom: 9px; white-space: nowrap; }
  .dialog header { display: flex; height: 29px; padding: 0 13px 10px 9px; background: #fff; align-items: center; }
  .dialog h2 { margin: 0 auto 0 5px; }
  .dialog header button { width: 12px; height: 20px; margin: 0 10px 0 37px; }
  .dialog header h2 + button { margin-left: 0; }
  .dialog header svg:not(.ico) { width: 12px; height: 12px; }
  .form { display: grid; grid-template-columns: 71px repeat(4, 1fr); grid-auto-rows: 26px; gap: 8px 5px; padding: 11px 0 11px 10px; align-items: center; border-bottom: 1px solid #aaa; }
  .three { grid-column: 2 / 5; } .four { grid-column: 2 / 6; } .first { grid-column: 1; }
  .last { justify-self: end; }
  .pair { display: flex; gap: 3px; align-items: center; }
  .four.pair { gap: 6px; }
  .clip { grid-column: 3 / 5; justify-self: end; width: 60px; overflow: hidden; }
  .codes { display: grid; grid-template-columns: 76px 78px 57px 47px; grid-auto-rows: 26px; row-gap: 8px; align-items: center; padding: 9px 0 13px 10px; }
  .switch { width: 39px; } .code { width: 67px; }
  .drop { position: relative; height: 27px; }
  .drop::after { content: ""; position: absolute; right: 8px; top: 11px; border: 5px solid transparent; border-top: 6px solid #000; border-bottom: 0; pointer-events: none; }
  .drop::before { content: ""; position: absolute; right: 2px; top: 2px; width: 21px; height: 23px; border: 2px solid; border-color: #fff #888 #888 #fff; pointer-events: none; }
  select { appearance: none; width: 100%; height: 27px; border: 2px solid #7a7a7a; background: #efefef; border-radius: 0; padding: 2px 0 0 2px; }
  select:disabled { color: #888; opacity: 1; }
  .context { padding: 0 3px 13px 10px; border-bottom: 1px solid #aaa; }
  .ctrow { display: flex; align-items: center; margin-top: 4px; }
  .ctrow label { width: 100px; }
  fieldset { margin: 6px 0 0 7px; border: 1px solid #aaa; border-right: 0; padding: 0 4px 24px 9px; min-width: 0; }
  legend { padding: 0 4px 0 1px; }
  .go { margin-left: auto; height: 26px; margin-bottom: -1px; }
  .opt { display: flex; align-items: center; gap: 8px; height: 21px; }
  .two { display: grid; grid-template-columns: 155px 1fr; align-items: start; height: 34px; }
  .title { width: 84px; } .short { width: 42px; }
  .resize { height: auto; margin-top: 13px; padding-bottom: 14px; }
  .picks { height: auto; padding-bottom: 11px; }
  .cap { margin-bottom: 1px; }
  .selcol .opt { height: 24px; }
  .fixed { padding: 4px 0 0 22px; }
  fieldset > .two:last-of-type { height: 26px; }
  input[type="checkbox"] { appearance: none; position: relative; width: 15px; height: 15px; margin: 0; border: 2px solid; border-color: #777 #fff #fff #777; background: #fff; flex: none; }
  input[type="checkbox"]:checked::after { content: ""; position: absolute; left: 3px; top: 0; width: 4px; height: 8px; border: solid #000; border-width: 0 2px 2px 0; transform: rotate(40deg); }
  input[type="radio"] { appearance: none; width: 13px; height: 13px; margin: 0 1px; border: 2px solid; border-color: #777 #fff #fff #777; border-radius: 50%; background: #fff; flex: none; }
  input[type="radio"]:checked { background: radial-gradient(circle, #000 0 2px, #fff 3px); }
  .buttons { display: flex; gap: 1px; padding: 8px 0 0 7px; }
  .marks { position: absolute; width: 300px; height: 320px; right: -10px; top: 630px; mix-blend-mode: multiply; pointer-events: none; }

  .taskbar { position: absolute; left: 0; right: 0; bottom: 0; display: flex; height: 50px; background: linear-gradient(90deg, #23383f, #20353f 50%, #1a2743 85%); color: #fff; }
  .start { width: 60px; }
  .find { display: flex; align-items: center; gap: 14px; width: 360px; padding-left: 15px; background: #f2f2f2; border: 1px solid #bbb; }
  .find input { border: 0; background: none; outline: 0; padding: 0; font: 18px/24px "Noto Sans", sans-serif; flex: 1; }
  .find input::placeholder { color: #333; opacity: 1; }
  .apps { display: flex; padding-left: 3px; }
  .apps button { width: 62px; position: relative; }
  .apps .ico { width: 30px; height: 30px; }
  .run::after { content: ""; position: absolute; left: 6px; right: 5px; bottom: 0; height: 3px; background: #76b9ed; }
  .apps .on { background: #4d5f66; width: 58px; margin-left: 2px; }
  .on::after { left: 0; right: 0; }
  .tray { display: flex; margin-left: auto; padding-right: 4px; }
  .tray button { width: 30px; }
  .ime { font: 700 18px/24px "Noto Sans CJK SC", sans-serif; }
  .clock { width: 80px; display: flex; flex-direction: column; align-items: center; padding-top: 3px; font: 14px/22px "Open Sans", sans-serif; }
  .tray .note { width: 54px; }
  .peek { width: 1px; margin-left: 9px; background: #7c8698; }
  .credit { position: absolute; right: 17px; bottom: 7px; font: 19px/28px "Liberation Sans", "Noto Sans CJK SC", sans-serif; color: rgba(205, 205, 205, .8); text-shadow: 1px 1px 1px rgba(0,0,0,.6); pointer-events: none; }
</style>
